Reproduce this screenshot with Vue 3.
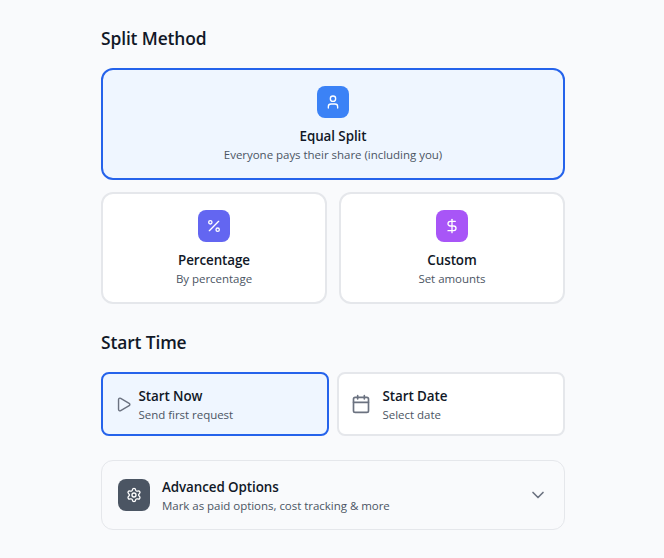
<script setup>
import { ref } from 'vue'

const method = ref('equal')
const start = ref('now')

const methods = [
  { id: 'equal', title: 'Equal Split', note: 'Everyone pays their share (including you)' },
  { id: 'percentage', title: 'Percentage', note: 'By percentage' },
  { id: 'custom', title: 'Custom', note: 'Set amounts' },
]
</script>

<template>
  <main class="page">
    <section>
      <h2 class="heading">Split Method</h2>
      <div class="methods">
        <button
          v-for="m in methods"
          :key="m.id"
          class="card method"
          :class="[m.id, { selected: method === m.id }]"
          @click="method = m.id"
        >
          <span class="badge">
            <svg class="icon small" viewBox="0 0 24 24">
              <template v-if="m.id === 'equal'">
                <path d="M19 21v-2a4 4 0 0 0-4-4H9a4 4 0 0 0-4 4v2" />
                <circle cx="12" cy="7" r="4" />
              </template>
              <template v-else-if="m.id === 'percentage'">
                <path d="M19 5 5 19" />
                <circle cx="6.5" cy="6.5" r="2.5" />
                <circle cx="17.5" cy="17.5" r="2.5" />
              </template>
              <template v-else>
                <path d="M12 2v20" />
                <path d="M17 5H9.500a3.500 3.500 0 0 0 0 7h5a3.500 3.500 0 0 1 0 7H6" />
              </template>
            </svg>
          </span>
          <span class="title">{{ m.title }}</span>
          <span class="note">{{ m.note }}</span>
        </button>
      </div>
    </section>

    <section class="start">
      <h2 class="heading">Start Time</h2>
      <div class="times">
        <button class="card time now" :class="{ selected: start === 'now' }" @click="start = 'now'">
          <svg class="icon play" viewBox="0 0 24 24">
            <path d="M5 5a2 2 0 0 1 3.008-1.728l11.997 6.998a2 2 0 0 1 .003 3.458l-12 7A2 2 0 0 1 5 19z" />
          </svg>
          <span class="label">
            <span class="title">Start Now</span>
            <span class="note">Send first request</span>
          </span>
        </button>
        <button class="card time date" :class="{ selected: start === 'date' }" @click="start = 'date'">
          <svg class="icon large" viewBox="0 0 24 24">
            <path d="M8 2v4M16 2v4M3 10h18" />
            <rect x="3" y="4" width="18" height="18" rx="2" />
          </svg>
          <span class="label">
            <span class="title">Start Date</span>
            <span class="note">Select date</span>
          </span>
        </button>
      </div>
    </section>

    <button class="advanced">
      <span class="badge">
        <svg class="icon small" viewBox="0 0 24 24">
          <path d="M9.671 4.136a2.34 2.34 0 0 1 4.659 0 2.34 2.34 0 0 0 3.319 1.915 2.34 2.34 0 0 1 2.33 4.033 2.34 2.34 0 0 0 0 3.831 2.34 2.34 0 0 1-2.33 4.033 2.34 2.34 0 0 0-3.319 1.915 2.34 2.34 0 0 1-4.659 0 2.34 2.34 0 0 0-3.32-1.915 2.34 2.34 0 0 1-2.33-4.033 2.34 2.34 0 0 0 0-3.831A2.34 2.34 0 0 1 6.35 6.051a2.34 2.34 0 0 0 3.319-1.915" />
          <circle cx="12" cy="12" r="3" />
        </svg>
      </span>
      <span class="label">
        <span class="title">Advanced Options</span>
        <span class="note">Mark as paid options, cost tracking &amp; more</span>
      </span>
      <svg class="icon large chevron" viewBox="0 0 24 24"><path d="m6 9 6 6 6-6" /></svg>
    </button>
  </main>
</template>

<style>
body {
  background: #f9fafb;
}
</style>

<style scoped>
.page {
  box-sizing: border-box;
  width: 664px;
  height: 558px;
  padding: 24px 99px 0 101px;
  background: #f9fafc;
  color: #111827;
  font-family: "Segoe UI", "Open Sans", "Noto Sans", sans-serif;
}
.heading {
  margin: 0 0 16px;
  font-size: 17.4px;
  line-height: 28px;
  font-weight: 600;
  letter-spacing: -0.12px;
}
button {
  box-sizing: border-box;
  margin: 0;
  font: inherit;
  color: inherit;
  text-align: left;
  cursor: pointer;
}
.methods {
  display: grid;
  grid-template-columns: 1fr 1fr;
  gap: 12px;
}
.card {
  border: 2px solid #e5e7eb;
  background: #fff;
}
.card.selected {
  border-color: #2563eb;
  background: #eff6ff;
}
.method {
  display: flex;
  flex-direction: column;
  align-items: center;
  height: 112px;
  padding: 16px;
  border-radius: 12px;
}
.method.equal {
  grid-column: span 2;
}
.badge {
  display: flex;
  flex: none;
  align-items: center;
  justify-content: center;
  width: 32px;
  height: 32px;
  border-radius: 8px;
  color: #fff;
  background: #4b5563;
}
.equal .badge { background: #3b82f6; }
.percentage .badge { background: #6366f1; }
.custom .badge { background: #a855f7; }
.method .title {
  margin-top: 8px;
}
.title {
  font-size: 13.4px;
  line-height: 20px;
  font-weight: 600;
  letter-spacing: -0.08px;
  white-space: nowrap;
}
.note {
  padding-top: 1px;
  font-size: 11.5px;
  line-height: 16px;
  color: #4b5563;
  letter-spacing: -0.03px;
  white-space: nowrap;
}
.icon {
  display: block;
  flex: none;
  fill: none;
  stroke: currentColor;
  stroke-width: 2;
  stroke-linecap: round;
  stroke-linejoin: round;
}
.small {
  width: 16px;
  height: 16px;
}
.large {
  width: 20px;
  height: 20px;
}
.play {
  width: 17px;
  height: 17px;
}
.start {
  margin-top: 24px;
}
.times {
  display: grid;
  grid-template-columns: 1fr 1fr;
  gap: 8px;
}
.time {
  display: flex;
  align-items: center;
  height: 64px;
  padding: 0 12px;
  border-radius: 8px;
}
.time .icon,
.chevron {
  color: #6b7280;
}
.time.now { gap: 7px; padding-left: 11.5px; }
.date { gap: 11.5px; }
.label {
  display: flex;
  flex-direction: column;
}
.advanced {
  display: flex;
  align-items: center;
  gap: 12px;
  width: 100%;
  height: 70px;
  margin-top: 24px;
  padding: 0 16px;
  border: 1px solid #e5e7eb;
  border-radius: 12px;
  background: transparent;
}
.chevron {
  margin-left: auto;
}
</style>
